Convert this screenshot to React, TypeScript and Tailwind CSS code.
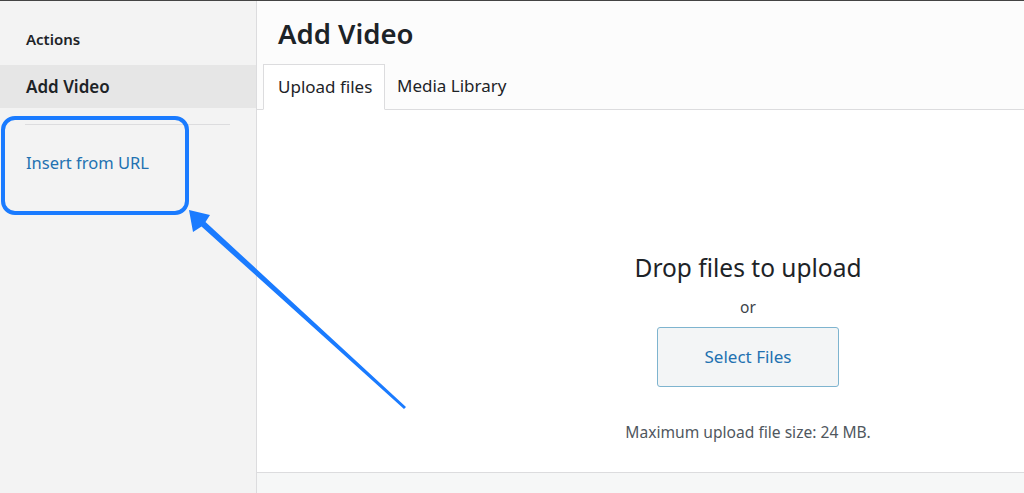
import React from "react";

export default function App() {
  return (
    <div
      className="relative w-[1024px] h-[493px] overflow-hidden bg-white border-t border-[#444]"
      style={{ fontFamily: '"Noto Sans", "Open Sans", sans-serif' }}
    >
      <div className="flex h-full">
        {/* Sidebar */}
        <aside className="w-[257px] shrink-0 h-full bg-[#f3f3f3] border-r border-[#dcdcde] pt-[24px]">
          <div className="pl-[26px] h-[28px] flex items-center text-[15px] font-semibold text-[#1d2327]">
            Actions
          </div>
          <div className="mt-[12px] h-[43px] bg-[#e6e6e6] pl-[26px] flex items-center text-[17px] font-semibold text-[#1d2327]">
            Add Video
          </div>
          <div className="ml-[25px] mr-[26px] mt-[16px] border-t border-[#dcdcde]" />
          <div className="pl-[26px] mt-[26px] h-[24px] flex items-center text-[16.5px] text-[#2271b1]">
            Insert from URL
          </div>
        </aside>

        {/* Main */}
        <main className="flex-1 h-full flex flex-col bg-[#fcfcfc] overflow-hidden">
          <div className="h-[63px] pl-[21px] flex items-center">
            <h1 className="text-[27.5px] font-semibold text-[#1d2327] leading-none mt-[2px]">Add Video</h1>
          </div>
          <div className="flex items-end h-[46px] pl-[6px] border-b border-[#dcdcde]">
            <div className="h-[46px] w-[122px] -mb-px bg-white border border-[#dcdcde] border-b-white flex items-center pl-[14px] text-[17px] text-[#1d2327]">
              Upload files
            </div>
            <div className="h-[46px] flex items-center pl-[12px] text-[17px] text-[#1d2327]">
              Media Library
            </div>
          </div>
          <div className="h-[363px] bg-white border-b border-[#dcdcde] overflow-hidden">
            <div className="w-[982px] flex flex-col items-center pt-[143px]">
              <div className="text-[24.5px] leading-[30px] text-[#1d2327]">Drop files to upload</div>
              <div className="mt-[14px] text-[15.5px] leading-[20px] text-[#3c434a]">or</div>
              <div className="mt-[10px] w-[182px] h-[60px] rounded-[3px] border border-[#7eb4cf] bg-[#f3f5f6] flex items-center justify-center text-[17px] text-[#2271b1]">
                Select Files
              </div>
              <div className="mt-[35px] text-[15.6px] leading-[20px] text-[#50575e]">
                Maximum upload file size: 24 MB.
              </div>
            </div>
          </div>
          <div className="flex-1 bg-[#f6f7f7]" />
        </main>
      </div>

      {/* Annotation overlay */}
      <div className="absolute left-[1px] top-[115px] w-[188px] h-[99px] rounded-[14px] border-[4px] border-[#1a7bff]" />
      <svg className="absolute left-0 top-0" width="1024" height="493" viewBox="0 0 1024 493">
        <polygon
          points="189,209 210,214 205.5,221 406,406 404,408 201.5,225.5 193,231"
          fill="#1a7bff"
        />
      </svg>
    </div>
  );
}
